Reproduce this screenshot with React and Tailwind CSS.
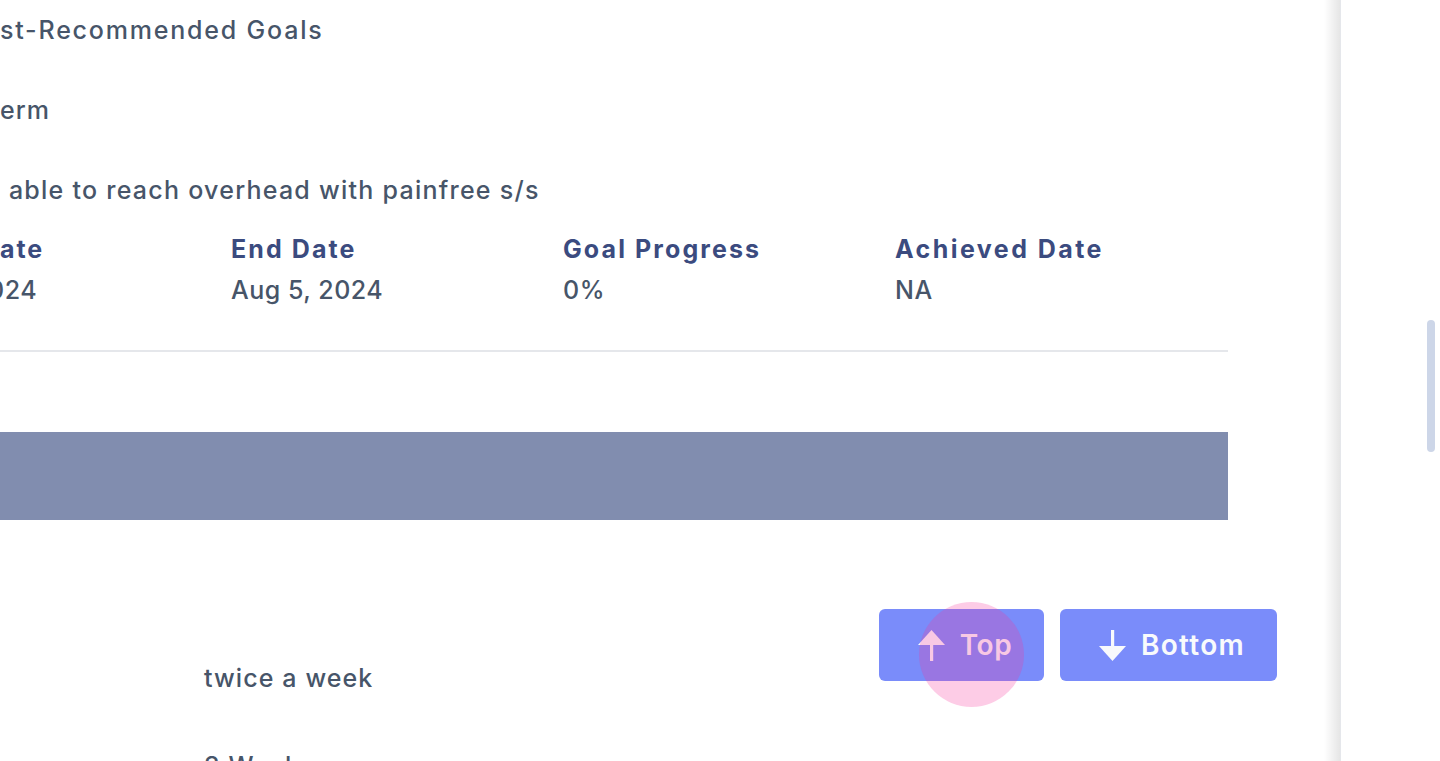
import React from "react";

const font = { fontFamily: "Inter, 'Open Sans', sans-serif" };

function ArrowUp() {
  return (
    <svg width="27" height="31" viewBox="0 0 27 31" className="shrink-0">
      <polygon points="0,15 13.5,0 27,15" fill="currentColor" />
      <rect x="12" y="13" width="3.2" height="18" fill="currentColor" />
    </svg>
  );
}

function ArrowDown() {
  return (
    <svg width="27" height="31" viewBox="0 0 27 31" className="shrink-0">
      <rect x="12" y="0" width="3.2" height="18" fill="currentColor" />
      <polygon points="0,16 13.5,31 27,16" fill="currentColor" />
    </svg>
  );
}

export default function App() {
  return (
    <div className="flex h-[761px] w-[1440px] overflow-hidden bg-white" style={font}>
      <div className="relative h-full w-[1340px] overflow-hidden bg-white">
        <div className="w-[1228px] text-[25px] font-medium leading-[36px] text-[#475569]">
          <div className="pt-[12px] tracking-[1.8px]">st-Recommended Goals</div>
          <div className="pt-[44px] tracking-[1px]">erm</div>
          <div className="pt-[44px] pl-[1px] tracking-[1.25px]">&nbsp;able to reach overhead with painfree s/s</div>
          <div className="grid grid-cols-[231px_332px_332px_333px] pt-[23px]">
            <div className="overflow-hidden">
              <div className="font-bold tracking-[1.9px] text-[#3b4b7f]">ate</div>
              <div className="-ml-[12px] mt-[5px] tracking-[0.5px]">024</div>
            </div>
            <div>
              <div className="font-bold tracking-[2.1px] text-[#3b4b7f]">End Date</div>
              <div className="mt-[5px] tracking-[0.5px]">Aug 5, 2024</div>
            </div>
            <div>
              <div className="font-bold tracking-[2.1px] text-[#3b4b7f]">Goal Progress</div>
              <div className="mt-[5px] tracking-[0.5px]">0%</div>
            </div>
            <div>
              <div className="font-bold tracking-[2.45px] text-[#3b4b7f]">Achieved Date</div>
              <div className="mt-[5px] tracking-[0.5px]">NA</div>
            </div>
          </div>
          <div className="mt-[42px] h-[2px] bg-[#e5e7eb]" />
          <div className="mt-[80px] h-[88px] bg-[#818daf]" />
          <div className="mt-[140px] pl-[204px] tracking-[1.1px]">twice a week</div>
          <div className="mt-[52px] pl-[204px] tracking-[1.1px]">3 Weeks</div>
        </div>

        <div className="absolute left-[879px] top-[609px] flex gap-[16px]">
          <button className="flex h-[72px] w-[165px] items-center justify-center gap-[15px] rounded-[6px] bg-[#7a8cfa] pl-[7px] text-[28px] font-semibold tracking-[0.6px] text-[#f8fafc]">
            <ArrowUp />
            <span>Top</span>
          </button>
          <button className="flex h-[72px] w-[217px] items-center justify-center gap-[15px] rounded-[6px] bg-[#7a8cfa] pl-[7px] text-[28px] font-semibold tracking-[1.3px] text-[#f8fafc]">
            <ArrowDown />
            <span>Bottom</span>
          </button>
        </div>
        <div className="pointer-events-none absolute left-[919px] top-[602px] h-[105px] w-[105px] rounded-full bg-pink-500/25" />
        <div className="pointer-events-none absolute right-0 top-0 h-full w-[16px] bg-gradient-to-r from-transparent to-black/10" />
      </div>
      <div className="relative h-full w-[100px] border-l border-[#e5e7eb] bg-white">
        <div className="absolute left-[86px] top-[320px] h-[132px] w-[8px] rounded-full bg-[#cdd6e8]" />
      </div>
    </div>
  );
}
